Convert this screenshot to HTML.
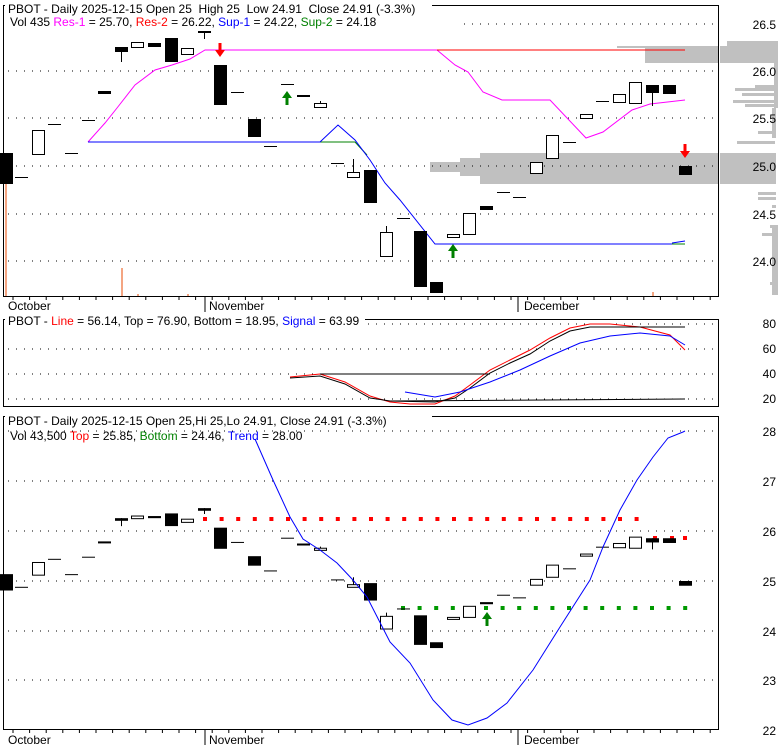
<!DOCTYPE html>
<html><head><meta charset="utf-8"><style>
body{margin:0;background:#fff;}
svg{display:block;font-family:"Liberation Sans",Arial,sans-serif;font-size:12px;}
text{white-space:pre;}
</style></head><body>
<svg id="s" width="780" height="745" viewBox="0 0 780 745" xmlns="http://www.w3.org/2000/svg"></svg>
<script>
var s=document.getElementById('s'),h='';
function R(x,y,w,hh,f,st){h+='<rect x="'+x+'" y="'+y+'" width="'+w+'" height="'+hh+'" fill="'+f+'"'+(st?' stroke="'+st+'"':'')+'/>';}
function L(x1,y1,x2,y2,c,extra){h+='<line x1="'+x1+'" y1="'+y1+'" x2="'+x2+'" y2="'+y2+'" stroke="'+c+'" '+(extra||'')+'/>';}
function P(pts,c){h+='<polyline fill="none" stroke="'+c+'" stroke-width="1" points="'+pts.map(function(p){return p.join(',')}).join(' ')+'"/>';}
function T(x,y,t,a){h+='<text x="'+x+'" y="'+y+'"'+(a?' text-anchor="'+a+'"':'')+'>'+t+'</text>';}
R(480,153,239,31,'#c0c0c0');R(430,162,50,10,'#c0c0c0');R(460,158,20,18,'#c0c0c0');R(645,46,74,17,'#c0c0c0');R(617,46,28,2,'#c0c0c0');
R(720,46,58,17,'#c0c0c0');R(727,41,51,5,'#c0c0c0');R(720,153,56,31,'#c0c0c0');
[[735,88,40],[742,93,33],[733,100,42],[745,104,30],[755,85,20],[737,141,38],[758,131,17],[758,192,18],[758,197,18],[772,205,4],[770,225,8],[762,233,16],[772,250,6],[770,282,8]].forEach(function(b){R(b[0],b[1],b[2],3,'#c0c0c0');});
R(772,108,4,30,'#c0c0c0');R(772,225,6,70,'#c0c0c0');R(774,60,4,48,'#c0c0c0');
[24,71,118,166,214,261].forEach(function(y){L(8,y,719,y,'#000','stroke-dasharray="1 7"');});
[324,349,374,399].forEach(function(y){L(8,y,719,y,'#000','stroke-dasharray="1 7"');});
[431,481,531,581,631,680].forEach(function(y){L(8,y,719,y,'#000','stroke-dasharray="1 7"');});
R(5,183,2,114,'#f4a582');R(121,268,2,29,'#f4a582');R(137,294,2,3,'#f4a582');R(187,294,2,3,'#f4a582');R(652,292,2,5,'#f4a582');
P([[88,142],[105,123],[117,108],[135,85],[155,70],[172,65],[190,59],[205,50],[437,50],[455,65],[468,72],[483,92],[502,100],[550,100],[586,138],[603,132],[632,110],[650,104],[685,100]],'#ff00ff');
L(437,50,685,50,'#ff0000');
P([[320,142],[355,142],[367,155]],'#008000');
P([[88,142],[320,142],[338,125],[355,140],[370,160],[385,183],[400,200],[435,244],[672,244]],'#0000ff');
L(672,244,685,244,'#008000');P([[672,243],[685,241]],'#0000ff');
var C=[[0,153,184,1],[15,177,177,2],[32,130,154,0],[48,124,124,2],[65,153,153,2],[82,120,120,2],[98,91,94,1],[115,47,52,1,47,62],[131,42,47,0],[148,43,47,1],[165,38,62,1],[181,48,54,0],[198,28,33,1,28,39],[214,65,105,1],[231,92,92,2],[248,119,137,1],[264,146,146,2],[281,84,84,2],[297,95,97,1],[314,103,107,0,101,107],[331,163,163,2],[347,172,177,0,159,177],[364,170,203,1],[380,232,256,0,226,256],[397,218,218,2],[414,231,287,1],[430,282,293,1],[447,234,237,0],[463,213,234,0],[480,206,210,1],[497,192,192,2],[513,197,197,2],[530,162,173,0],[546,135,158,0],[563,142,142,2],[580,114,118,0],[596,101,101,2],[613,94,102,0],[629,82,103,0],[646,85,93,1,85,106],[663,85,94,1],[679,166,175,1]];
function candles(tf){C.forEach(function(c){var x=c[0],t=tf(c[1]),b=tf(c[2]);
 if(c[4]!==undefined)L(x+6.5,tf(c[4]),x+6.5,tf(c[5]),'#000');
 if(c[3]==2)L(x,t+0.5,x+13,t+0.5,'#000');
 else if(c[3]==1)R(x,t,13,Math.max(b-t,2),'#000');
 else R(x+0.5,t+0.5,12,Math.max(b-t,2),'#fff','#000');});}
candles(function(y){return y;});
function arrow(x,y,c,down){if(down)h+='<polygon fill="'+c+'" points="'+(x-1.5)+','+y+' '+(x+1.5)+','+y+' '+(x+1.5)+','+(y+7)+' '+(x+5)+','+(y+7)+' '+x+','+(y+14)+' '+(x-5)+','+(y+7)+' '+(x-1.5)+','+(y+7)+'"/>';
 else h+='<polygon fill="'+c+'" points="'+x+','+y+' '+(x+5)+','+(y+7)+' '+(x+1.5)+','+(y+7)+' '+(x+1.5)+','+(y+14)+' '+(x-1.5)+','+(y+14)+' '+(x-1.5)+','+(y+7)+' '+(x-5)+','+(y+7)+'"/>';}
arrow(220,43,'#ff0000',1);arrow(685,144,'#ff0000',1);arrow(287,91,'#008000',0);arrow(453,244,'#008000',0);
h+='<rect x="3.5" y="5.5" width="715" height="291" fill="none" stroke="#000"/>';
R(5,0,427,17,'#fff');R(5,17,458,14,'#fff');
T(8,13,'PBOT - Daily 2025-12-15 Open 25  High 25  Low 24.91  Close 24.91 (-3.3%)');
h+='<text x="10" y="26">Vol 435 <tspan fill="#ff00ff">Res-1</tspan> = 25.70, <tspan fill="#ff0000">Res-2</tspan> = 26.22, <tspan fill="#0000ff">Sup-1</tspan> = 24.22, <tspan fill="#008000">Sup-2</tspan> = 24.18</text>';
[['26.5',29],['26.0',76],['25.5',123],['25.0',171],['24.5',219],['24.0',266]].forEach(function(a){T(776,a[1],a[0],'end');});
for(var x=13;x<719;x+=16.6){L(x,297,x,300,'#000');L(x,730,x,733,'#000');}
[[205,297,312],[518,297,312],[205,730,745],[518,730,745]].forEach(function(a){L(a[0],a[1],a[0],a[2],'#000');});
T(8,310,'October');T(209,310,'November');T(524,310,'December');
T(8,744,'October');T(209,744,'November');T(524,744,'December');
P([[290,377],[320,374],[345,382],[370,396],[390,402],[410,404],[435,404],[455,396],[470,385],[490,370],[510,360],[530,350],[550,338],[570,328],[590,324],[610,324],[640,327],[670,335],[685,350]],'#ff0000');
P([[290,378],[320,376],[345,384],[370,398],[390,401],[435,402],[455,398],[470,388],[490,373],[510,363],[530,354],[550,341],[570,331],[590,327],[685,327]],'#000');
P([[320,374],[490,374]],'#000');P([[390,401],[685,399]],'#000');
P([[405,392],[435,397],[460,392],[490,382],[520,370],[550,356],[580,343],[610,336],[640,333],[670,336],[685,345]],'#0000ff');
h+='<rect x="3.5" y="319.5" width="715" height="87" fill="none" stroke="#000"/>';
R(5,313,360,13,'#fff');
h+='<text x="8" y="325">PBOT - <tspan fill="#ff0000">Line</tspan> = 56.14, Top = 76.90, Bottom = 18.95, <tspan fill="#0000ff">Signal</tspan> = 63.99</text>';
[['80',328],['60',353],['40',378],['20',403]].forEach(function(a){T(776,a[1],a[0],'end');});
for(var i=0;i<27;i++){var xx=205+i*16.6;R(xx-2,517,4,4,'#ff0000');}
[655,672,685].forEach(function(x){R(x-2,536,4,4,'#ff0000');});
for(var i=0;i<18;i++){var xx=403+i*16.6;R(xx-2,606,4,4,'#009900');}
candles(function(y){return 581+(y-166)*0.528;});
P([[255,439],[273,480],[290,517],[303,539],[320,550],[337,563],[353,580],[367,597],[390,642],[410,663],[433,700],[452,720],[468,725],[487,718],[507,703],[533,670],[560,627],[590,580],[603,547],[620,510],[637,480],[653,457],[668,438],[683,432],[685,431]],'#0000ff');
arrow(487,612,'#008000',0);
h+='<rect x="3.5" y="416.5" width="715" height="313" fill="none" stroke="#000"/>';
R(5,410,427,17,'#fff');
T(8,425,'PBOT - Daily 2025-12-15 Open 25,Hi 25,Lo 24.91, Close 24.91 (-3.3%)');
h+='<text x="10" y="440">Vol 43,500 <tspan fill="#ff0000">Top</tspan> = 25.85, <tspan fill="#008000">Bottom</tspan> = 24.46, <tspan fill="#0000ff">Trend</tspan> = 28.00</text>';
[['28',436],['27',486],['26',536],['25',586],['24',636],['23',685],['22',735]].forEach(function(a){T(776,a[1],a[0],'end');});
s.innerHTML=h;
</script>
</body></html>
